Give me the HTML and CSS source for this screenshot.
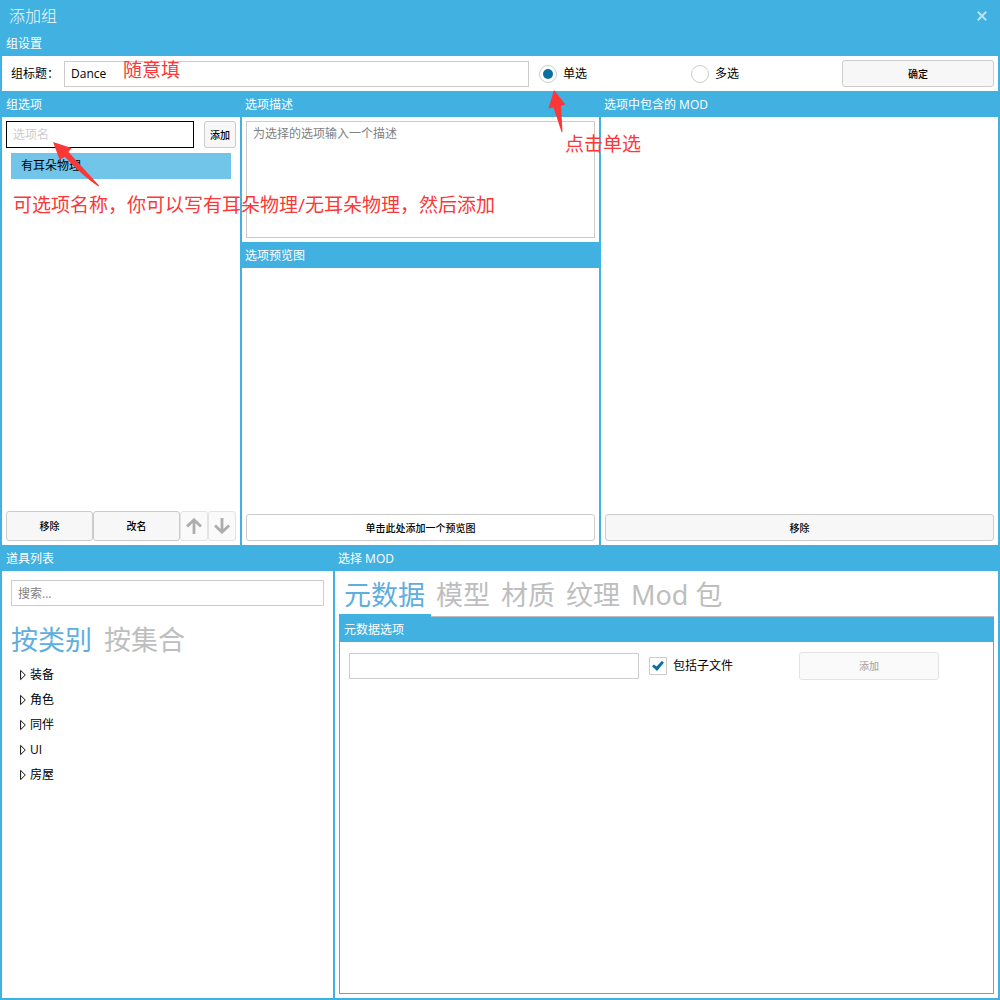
FILE: index.html
```
<!DOCTYPE html>
<html lang="zh-CN">
<head>
<meta charset="utf-8">
<title>添加组</title>
<link rel="stylesheet" href="styles.css">
</head>
<body>
<div class="window">
  <header class="titlebar">
    <h1 class="title">添加组</h1>
    <button class="close" type="button" aria-label="关闭">
      <svg width="10" height="10" viewBox="0 0 10 10"><path d="M.8 .8L9.2 9.2M9.2 .8L.8 9.2" stroke="currentColor" stroke-width="2" fill="none"/></svg>
    </button>
  </header>

  <section class="settings">
    <h2 class="bar">组设置</h2>
    <form class="settings-row">
      <label class="label" for="group-title">组标题：</label>
      <input class="field" id="group-title" type="text" value="Dance">
      <label class="choice"><input class="radio" type="radio" name="mode" checked>单选</label>
      <label class="choice"><input class="radio" type="radio" name="mode">多选</label>
      <button class="button" type="button">确定</button>
    </form>
  </section>

  <main class="workspace">
    <div class="upper">
      <section class="column">
        <h2 class="bar">组选项</h2>
        <div class="body options">
          <div class="add-row">
            <input class="field field-focus" type="text" placeholder="选项名" aria-label="选项名">
            <button class="button" type="button">添加</button>
          </div>
          <ul class="option-list"><li class="option">有耳朵物理</li></ul>
          <div class="actions">
            <button class="button" type="button">移除</button>
            <button class="button" type="button">改名</button>
            <button class="button" type="button" aria-label="上移" disabled>
              <svg width="16" height="16" viewBox="0 0 16 16"><path d="M8 16V2M1 8.5L8 1.8L15 8.5" stroke="currentColor" stroke-width="2.8" fill="none"/></svg>
            </button>
            <button class="button" type="button" aria-label="下移" disabled>
              <svg width="16" height="16" viewBox="0 0 16 16"><path d="M8 0V14M1 7.5L8 14.2L15 7.5" stroke="currentColor" stroke-width="2.8" fill="none"/></svg>
            </button>
          </div>
        </div>
      </section>

      <section class="column">
        <h2 class="bar">选项描述</h2>
        <div class="body description">
          <textarea class="field textarea" placeholder="为选择的选项输入一个描述" aria-label="选项描述"></textarea>
        </div>
        <h2 class="bar">选项预览图</h2>
        <div class="body bottom">
          <button class="button button-plain" type="button">单击此处添加一个预览图</button>
        </div>
      </section>

      <section class="column">
        <h2 class="bar">选项中包含的 MOD</h2>
        <div class="body bottom">
          <button class="button" type="button">移除</button>
        </div>
      </section>
    </div>

    <div class="lower">
      <section class="column">
        <h2 class="bar">道具列表</h2>
        <div class="body items">
          <input class="field" type="search" placeholder="搜索..." aria-label="搜索">
          <nav class="tabs">
            <a class="tab tab-active" href="#category">按类别</a>
            <a class="tab" href="#set">按集合</a>
          </nav>
          <ul class="tree">
            <li class="node"><svg class="caret" width="6" height="12" viewBox="0 0 6 12"><path d="M.6 1.4L5.3 6L.6 10.600Z"/></svg>装备</li>
            <li class="node"><svg class="caret" width="6" height="12" viewBox="0 0 6 12"><path d="M.6 1.4L5.3 6L.6 10.600Z"/></svg>角色</li>
            <li class="node"><svg class="caret" width="6" height="12" viewBox="0 0 6 12"><path d="M.6 1.4L5.3 6L.6 10.600Z"/></svg>同伴</li>
            <li class="node"><svg class="caret" width="6" height="12" viewBox="0 0 6 12"><path d="M.6 1.4L5.3 6L.6 10.600Z"/></svg>UI</li>
            <li class="node"><svg class="caret" width="6" height="12" viewBox="0 0 6 12"><path d="M.6 1.4L5.3 6L.6 10.600Z"/></svg>房屋</li>
          </ul>
        </div>
      </section>

      <section class="column">
        <h2 class="bar">选择 MOD</h2>
        <div class="body">
          <nav class="tabs tabs-lined">
            <a class="tab tab-active" href="#metadata">元数据</a>
            <a class="tab" href="#models">模型</a>
            <a class="tab" href="#materials">材质</a>
            <a class="tab" href="#textures">纹理</a>
            <a class="tab" href="#modpack">Mod 包</a>
          </nav>
          <div class="panel">
            <h3 class="bar bar-inner">元数据选项</h3>
            <form class="metadata-row">
              <input class="field" type="text" aria-label="元数据">
              <label class="choice"><input class="check" type="checkbox" checked>包括子文件</label>
              <button class="button" type="button" disabled>添加</button>
            </form>
          </div>
        </div>
      </section>
    </div>
  </main>

  <p class="note note-title">随意填</p>
  <p class="note note-mode">点击单选</p>
  <p class="note note-option">可选项名称，你可以写有耳朵物理/无耳朵物理，然后添加</p>
  <svg class="arrow arrow-mode" width="18" height="42" viewBox="0 0 18 42"><path d="M6 0L17.500 14.500L13 15.500L14.500 42H13.500L5.500 17.500L.5 18.500Z"/></svg>
  <svg class="arrow arrow-option" width="48" height="46" viewBox="0 0 48 46"><path d="M0 0L18.500 6L15.500 10L46 43.500L45.500 44.500Q32 36 12 15L6.500 17.500Z"/></svg>
</div>
</body>
</html>
```
FILE: styles.css
```
:root {
  --blue: #41b1e1;
  --line: #ccc;
  --ink: #000;
}

* {
  box-sizing: border-box;
}

body,
h1,
h2,
h3,
p,
ul {
  margin: 0;
  padding: 0;
}

body,
button,
input,
textarea {
  font-family: "Open Sans", "Noto Sans CJK SC", sans-serif;
  font-size: 12px;
  line-height: 18px;
  color: var(--ink);
}

ul {
  list-style: none;
}

.window {
  position: relative;
  display: flex;
  flex-direction: column;
  min-height: 100vh;
  padding: 0 2px 2px;
  background: var(--blue);
}

.titlebar {
  display: flex;
  align-items: center;
  justify-content: space-between;
  height: 30px;
  padding: 2px 11px 0 7px;
}

.title {
  font-size: 16px;
  font-weight: 300;
  line-height: 24px;
  color: #f2fafd;
}

.close {
  display: flex;
  padding: 0;
  border: 0;
  background: none;
  color: #b8e1f4;
}

.bar {
  height: 26px;
  padding: 0 3px;
  background: var(--blue);
  color: #fff;
  font-size: 12px;
  font-weight: 400;
  line-height: 28px;
}

.column:first-child > .bar,
.settings > .bar,
.bar-inner {
  padding: 0 4px;
}

.bar-inner {
  height: 25px;
  line-height: 26px;
}

.settings-row {
  display: grid;
  grid-template-columns: 43px 465fr 142fr 141fr 152fr;
  column-gap: 10px;
  align-items: center;
  height: 35px;
  padding: 0 4px 0 9px;
  background: #fff;
}

.label {
  white-space: nowrap;
}

.field {
  width: 100%;
  min-width: 0;
  height: 26px;
  margin: 0;
  padding: 0 6px;
  border: 1px solid var(--line);
  border-radius: 0;
  outline: 0;
  background: #fff;
  appearance: none;
}

.field::placeholder {
  color: #808080;
  opacity: 1;
}

.field-focus {
  height: 27px;
  border-color: #000;
}

.field-focus::placeholder {
  color: #ccc;
}

.textarea {
  display: block;
  height: 117px;
  padding: 3px 6px;
  resize: none;
}

.button {
  display: flex;
  align-items: center;
  justify-content: center;
  height: 27px;
  padding: 0;
  border: 1px solid var(--line);
  border-radius: 3px;
  background: #f7f7f7;
  font-size: 10px;
  font-weight: 500;
}

.button:disabled {
  border-color: #e3e3e3;
  background: #fafafa;
  color: #adadad;
}

.button-plain {
  background: #fff;
}

.choice {
  display: flex;
  align-items: center;
  gap: 6px;
  line-height: 20px;
  white-space: nowrap;
}

.radio,
.check {
  display: grid;
  place-content: center;
  flex: none;
  width: 18px;
  height: 18px;
  margin: 0;
  border: 1px solid var(--line);
  background: #fff;
  appearance: none;
}

.radio {
  border-radius: 50%;
}

.radio:checked::before {
  content: "";
  width: 10px;
  height: 10px;
  border-radius: 50%;
  background: #086f9e;
}

.check:checked::before {
  content: "";
  width: 12px;
  height: 10px;
  background: #086f9e;
  clip-path: polygon(0 52%, 16% 34%, 38% 56%, 82% 0, 100% 16%, 42% 100%);
}

.workspace {
  display: grid;
  flex: 1;
  grid-template-rows: 454fr 453fr;
}

.upper,
.lower {
  display: grid;
  column-gap: 2px;
}

.upper {
  grid-template-columns: 238fr 357fr 397fr;
}

.lower {
  grid-template-columns: 331fr 663fr;
}

.column {
  display: flex;
  flex-direction: column;
  min-width: 0;
}

.body {
  display: flex;
  flex: 1;
  flex-direction: column;
  padding: 4px;
  background: #fff;
}

.description {
  flex: none;
}

.bottom {
  justify-content: flex-end;
}

.add-row {
  display: grid;
  grid-template-columns: 1fr 32px;
  column-gap: 10px;
}

.option-list {
  flex: 1;
  padding: 5px;
}

.option {
  height: 26px;
  padding: 0 10px;
  background: #71c5e9;
  line-height: 26px;
}

.actions {
  display: grid;
  grid-template-columns: 1fr 1fr 28px 28px;
}

.actions .button {
  height: 30px;
}

.items {
  padding: 9px;
}

.tabs {
  display: flex;
  gap: 12px;
}

.tab {
  color: #bebebe;
  font-family: "Noto Sans", "Noto Sans CJK SC", sans-serif;
  font-size: 27px;
  font-weight: 400;
  line-height: 40px;
  text-decoration: none;
  white-space: nowrap;
}

.tab-active {
  color: #5eaee0;
}

.items .tabs {
  padding: 14px 0 2px;
}

.tree {
  padding: 0 9px;
}

.node {
  display: flex;
  align-items: center;
  gap: 4px;
  height: 25px;
}

.caret {
  fill: none;
  stroke: #111;
}

.tabs-lined {
  height: 42px;
  gap: 0;
  border-bottom: 1px solid #bebebe;
}

.tabs-lined .tab {
  height: 42px;
  padding: 0 6px 0 5px;
}

.tabs-lined .tab-active {
  border-bottom: 3px solid var(--blue);
}

.panel {
  flex: 1;
  border: 1px solid var(--blue);
  border-top: 0;
}

.metadata-row {
  display: grid;
  grid-template-columns: 290fr 140fr 140fr 44fr;
  column-gap: 10px;
  align-items: center;
  padding: 10px 0 0 9px;
}

.metadata-row .button {
  height: 28px;
}

.note {
  position: absolute;
  color: #fb3838;
  font-size: 19px;
  line-height: 28px;
  white-space: nowrap;
}

.note-title {
  left: 123px;
  top: 56px;
}

.note-mode {
  left: 565px;
  top: 130px;
}

.note-option {
  left: 13px;
  top: 191px;
}

.arrow {
  position: absolute;
  fill: #fb3838;
}

.arrow-mode {
  left: 548px;
  top: 90px;
}

.arrow-option {
  left: 53px;
  top: 142px;
}
```
